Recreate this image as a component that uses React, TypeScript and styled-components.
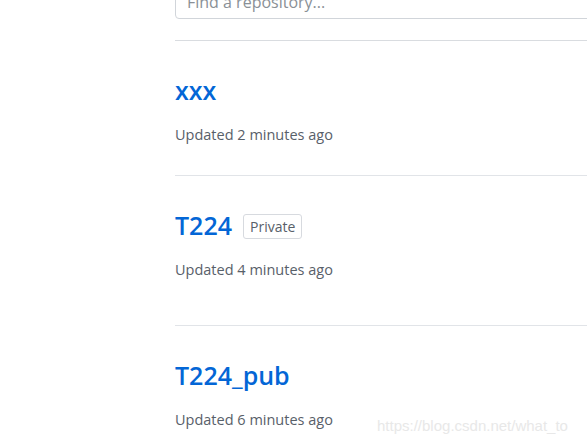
import styled, { createGlobalStyle } from 'styled-components';

const GlobalStyle = createGlobalStyle`
  html, body {
    margin: 0;
    padding: 0;
    background: #fff;
  }
  body {
    font-family: 'Open Sans', 'Noto Sans', 'Liberation Sans', sans-serif;
    overflow: hidden;
  }
`;

const Page = styled.div`
  position: relative;
  width: 587px;
  height: 446px;
  overflow: hidden;
  padding-left: 175px;
  box-sizing: border-box;
`;

const FilterBar = styled.div`
  padding-bottom: 21px;
  border-bottom: 1px solid #d9dce0;
`;

const SearchInput = styled.input`
  display: block;
  box-sizing: border-box;
  width: 440px;
  height: 35px;
  margin-top: -16px;
  padding: 0 11px;
  border: 1px solid #d1d5da;
  border-radius: 4px;
  font-family: inherit;
  font-size: 16px;
  color: #24292e;
  outline: none;

  &::placeholder {
    color: #8a9096;
  }
`;

const RepoList = styled.ul`
  list-style: none;
  margin: 0;
  padding: 0;
`;

const RepoItem = styled.li<{ $extra?: number }>`
  padding-top: 35px;
  padding-bottom: ${(p) => 30 + (p.$extra ?? 0)}px;
  border-bottom: 1px solid #e1e4e8;
`;

const TitleRow = styled.div`
  display: flex;
  align-items: center;
  gap: 11px;
  height: 28px;
`;

const RepoName = styled.a`
  font-size: 25px;
  font-weight: 600;
  color: #0366d6;
  text-decoration: none;
  line-height: 28px;
`;

const Badge = styled.span`
  display: inline-flex;
  align-items: center;
  height: 25px;
  box-sizing: border-box;
  padding: 0 6px;
  border: 1px solid #d7dadf;
  border-radius: 3px;
  font-size: 14px;
  color: #586069;
  margin-top: 2px;
`;

const Meta = styled.div`
  margin-top: 21px;
  font-size: 14.5px;
  line-height: 20px;
  color: #586069;
`;

const Watermark = styled.div`
  position: absolute;
  left: 377px;
  top: 417px;
  font-family: 'Liberation Sans', Arial, sans-serif;
  font-size: 15px;
  color: #e8e8e8;
  white-space: nowrap;
`;

const repos = [
  { name: 'xxx', updated: 'Updated 2 minutes ago' },
  { name: 'T224', updated: 'Updated 4 minutes ago', private: true, extra: 15 },
  { name: 'T224_pub', updated: 'Updated 6 minutes ago' },
];

export default function App() {
  return (
    <>
      <GlobalStyle />
      <Page>
        <FilterBar>
          <SearchInput placeholder='Find a repository...' />
        </FilterBar>
        <RepoList>
          {repos.map((r) => (
            <RepoItem key={r.name} $extra={r.extra}>
              <TitleRow>
                <RepoName href='#'>{r.name}</RepoName>
                {r.private && <Badge>Private</Badge>}
              </TitleRow>
              <Meta>{r.updated}</Meta>
            </RepoItem>
          ))}
        </RepoList>
        <Watermark>https://blog.csdn.net/what_to</Watermark>
      </Page>
    </>
  );
}
